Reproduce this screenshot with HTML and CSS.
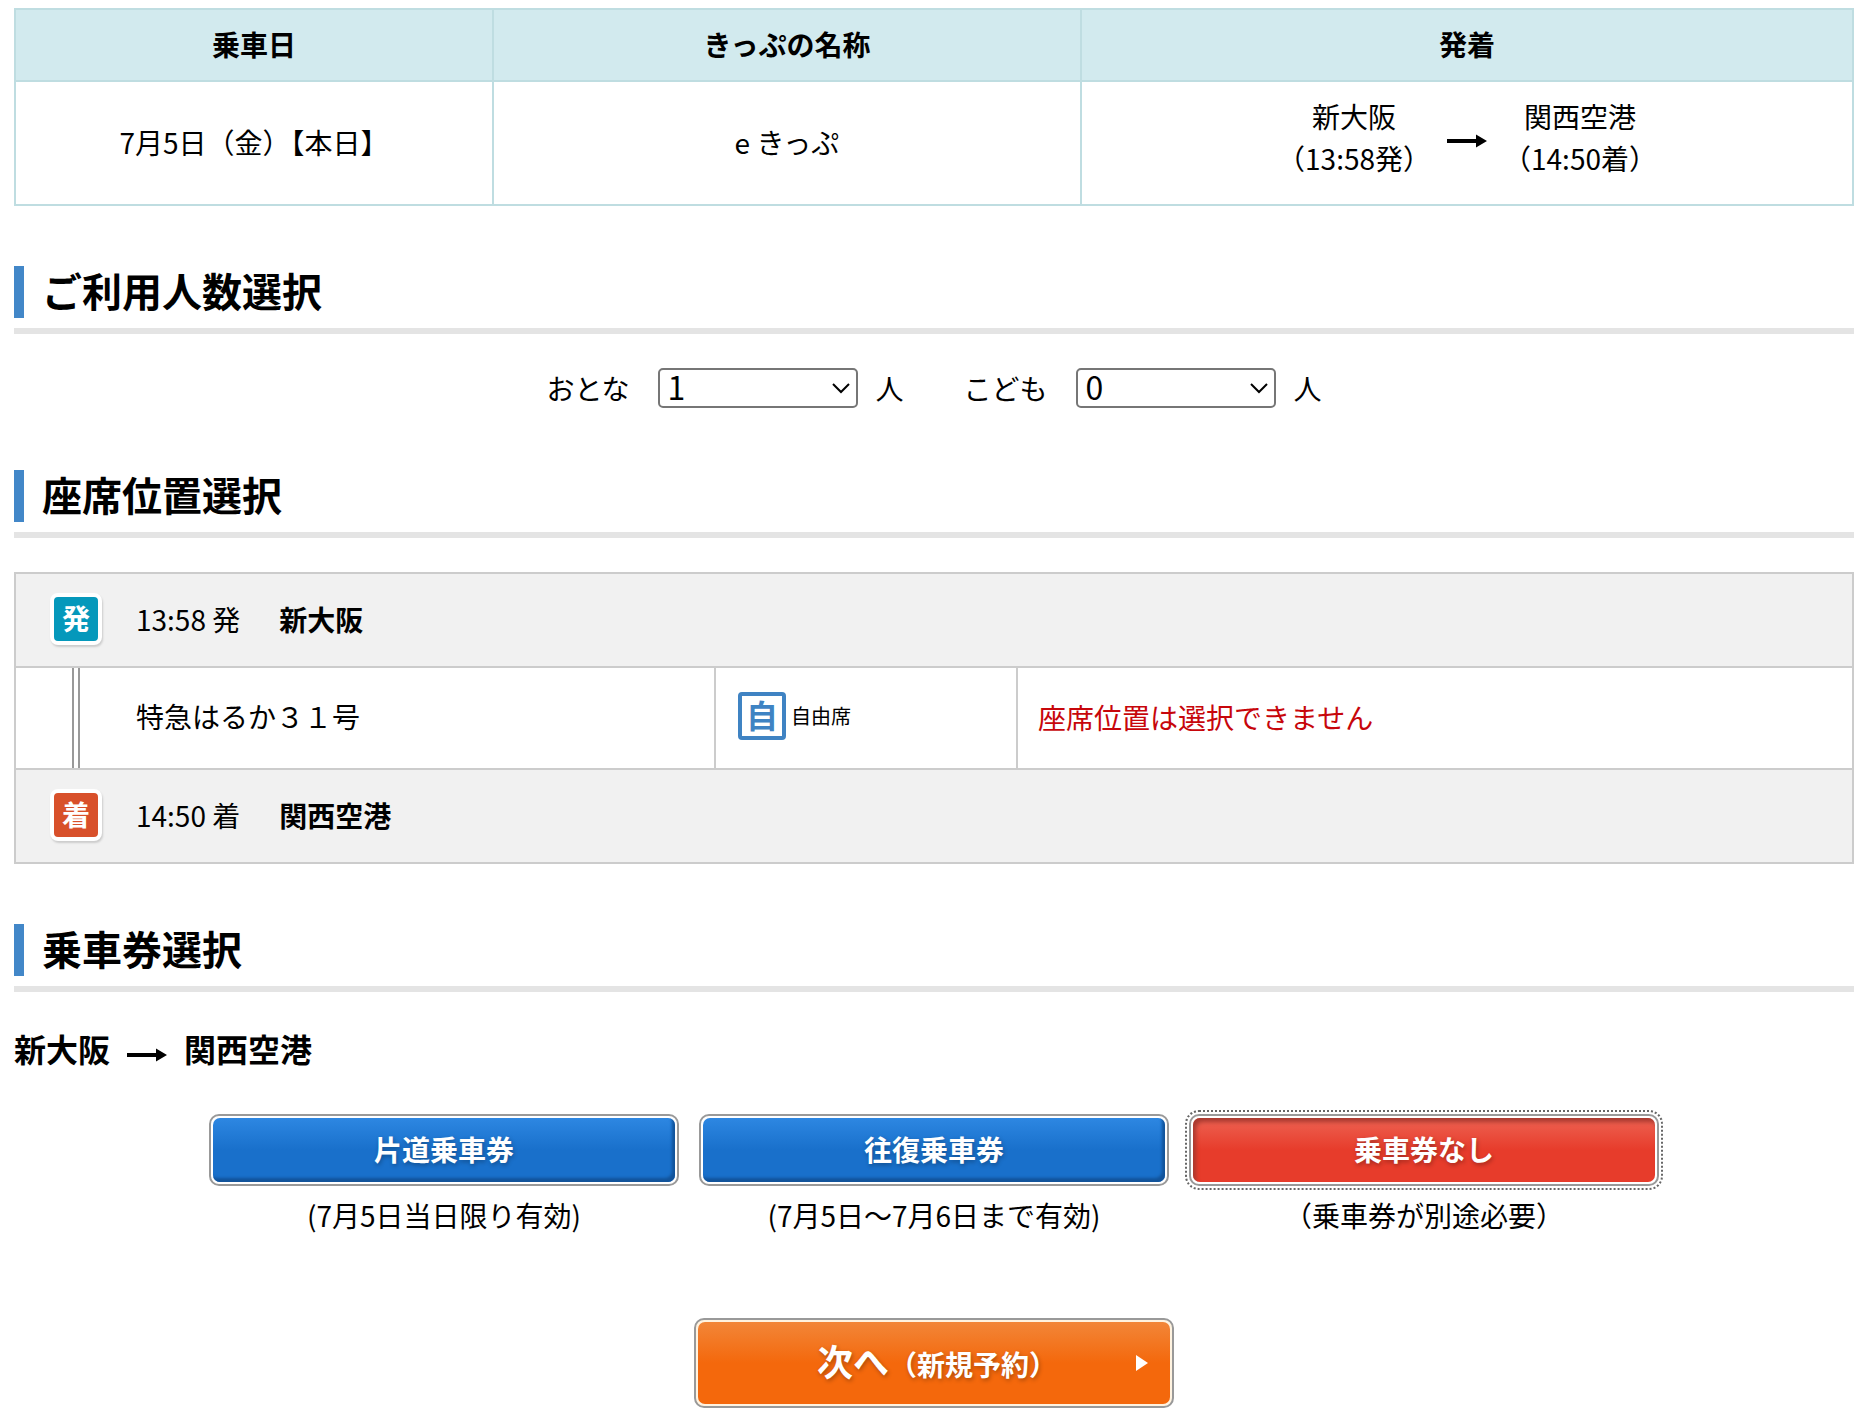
FILE: index.html
```html
<!DOCTYPE html>
<html lang="ja">
<head>
<meta charset="utf-8">
<meta name="viewport" content="width=device-width, initial-scale=1">
<title>人数・座席位置・乗車券選択</title>
<link rel="stylesheet" href="styles.css">
</head>
<body>
<main class="page">
  <table class="summary">
    <colgroup><col class="col-date"><col class="col-name"><col></colgroup>
    <thead>
      <tr><th scope="col">乗車日</th><th scope="col">きっぷの名称</th><th scope="col">発着</th></tr>
    </thead>
    <tbody>
      <tr>
        <td>7月5日（金）【本日】</td>
        <td>e きっぷ</td>
        <td>
          <div class="trip">
            <p class="stop">新大阪<br>（13:58発）</p>
            <svg class="arrow" viewBox="0 0 40 14" aria-hidden="true"><path d="M0 5h29V0.500L40 7 29 13.500V9H0z"/></svg>
            <p class="stop">関西空港<br>（14:50着）</p>
          </div>
        </td>
      </tr>
    </tbody>
  </table>

  <form>
    <section class="section">
      <h2 class="heading"><span class="heading-text">ご利用人数選択</span></h2>
      <div class="people">
        <div class="people-group">
          <label for="adult">おとな</label>
          <span class="select">
            <select id="adult"><option>0</option><option selected>1</option><option>2</option><option>3</option></select>
            <svg class="chevron" viewBox="0 0 18 12" aria-hidden="true"><path d="M1 1l8 8 8-8"/></svg>
          </span>
          <span class="unit">人</span>
        </div>
        <div class="people-group">
          <label for="child">こども</label>
          <span class="select">
            <select id="child"><option selected>0</option><option>1</option><option>2</option><option>3</option></select>
            <svg class="chevron" viewBox="0 0 18 12" aria-hidden="true"><path d="M1 1l8 8 8-8"/></svg>
          </span>
          <span class="unit">人</span>
        </div>
      </div>
    </section>

    <section class="section">
      <h2 class="heading"><span class="heading-text">座席位置選択</span></h2>
      <table class="seats">
        <colgroup><col class="col-rail"><col class="col-train"><col class="col-class"><col></colgroup>
        <tbody>
          <tr class="station">
            <td colspan="4"><div class="station-line">
              <span class="badge badge-dep">発</span><span class="time">13:58 発</span><strong>新大阪</strong>
            </div></td>
          </tr>
          <tr class="train">
            <td class="rail"></td>
            <td class="train-name">特急はるか３１号</td>
            <td class="seat-class"><div class="seat-line"><span class="seat-mark">自</span><span>自由席</span></div></td>
            <td class="notice">座席位置は選択できません</td>
          </tr>
          <tr class="station">
            <td colspan="4"><div class="station-line">
              <span class="badge badge-arr">着</span><span class="time">14:50 着</span><strong>関西空港</strong>
            </div></td>
          </tr>
        </tbody>
      </table>
    </section>

    <section class="section">
      <h2 class="heading"><span class="heading-text">乗車券選択</span></h2>
      <h3 class="route">新大阪<svg class="arrow" viewBox="0 0 40 14" aria-hidden="true"><path d="M0 5h29V0.500L40 7 29 13.500V9H0z"/></svg>関西空港</h3>
      <div class="tickets">
        <div class="ticket"><button type="button" class="btn btn-blue">片道乗車券</button><p>(7月5日当日限り有効)</p></div>
        <div class="ticket"><button type="button" class="btn btn-blue">往復乗車券</button><p>(7月5日～7月6日まで有効)</p></div>
        <div class="ticket"><button type="button" class="btn btn-red">乗車券なし</button><p>（乗車券が別途必要）</p></div>
      </div>
    </section>

    <div class="submit">
      <button type="submit" class="btn btn-next"><span class="next-main">次へ</span>（新規予約）<svg class="play" viewBox="0 0 12 16" aria-hidden="true"><path d="M0 0l12 8-12 8z"/></svg></button>
    </div>
  </form>
</main>
</body>
</html>
```
FILE: styles.css
```css
* { box-sizing: border-box; }

body {
  margin: 0;
  background: #fff;
  color: #000;
  font-family: "Noto Sans CJK JP", sans-serif;
  font-size: 28px;
  line-height: 42px;
}

p, h2, h3 { margin: 0; }

.page { padding: 8px 10px 4px 14px; }

/* Journey summary */
.summary {
  width: 100%;
  border-collapse: collapse;
  table-layout: fixed;
  text-align: center;
}
.summary th,
.summary td { padding: 0 0 2px; border: 2px solid #bfdde1; }
.summary th { height: 72px; background: #d2eaee; font-weight: 700; }
.summary td { height: 124px; }
.col-date { width: 26%; }
.col-name { width: 32%; }

.trip {
  display: flex;
  align-items: center;
  justify-content: center;
  gap: 16px;
  padding-bottom: 10px;
}
.arrow { width: 40px; height: 14px; flex: none; fill: #000; }
.trip .arrow { margin-top: 8px; }

/* Section headings */
.section { padding-top: 60px; }
.heading {
  padding-bottom: 10px;
  margin-bottom: 34px;
  border-bottom: 6px solid #e4e4e4;
  font-size: 40px;
  line-height: 48px;
  font-weight: 700;
}
.heading-text {
  display: block;
  padding: 0 0 4px 18px;
  border-left: 10px solid #4287c8;
}

/* Passenger counts */
.people { display: flex; justify-content: center; gap: 60px; padding-bottom: 2px; }
.people-group { display: flex; align-items: center; line-height: 40px; }
.select { position: relative; display: block; margin: 0 18px 0 28px; }
.select select {
  display: block;
  width: 200px;
  height: 40px;
  padding: 0 40px 4px 8px;
  border: 2px solid #767676;
  border-radius: 5px;
  appearance: none;
  background: #fff;
  color: #000;
  font-family: inherit;
  font-size: 32px;
  line-height: 32px;
}
.chevron {
  position: absolute;
  top: 15px;
  right: 8px;
  width: 18px;
  height: 12px;
  fill: none;
  stroke: #000;
  stroke-width: 2;
  pointer-events: none;
}

/* Seat table */
.seats {
  width: 100%;
  border-collapse: collapse;
  table-layout: fixed;
}
.seats td { padding: 0 0 2px; border: 2px solid #ccc; }
.col-rail { width: 65px; }
.col-train { width: 635px; }
.col-class { width: 302px; }
.station td { height: 94px; background: #f1f1f1; }
.train td { height: 102px; }
.station-line { display: flex; align-items: center; padding-left: 34px; }
.time { margin: 0 39px 0 34px; }
.seats .rail {
  border-right: 0;
  background: linear-gradient(90deg, #999 0 2px, #fff 2px 6px, #999 6px 8px) right / 8px 100% no-repeat;
}
.seats .train-name { padding: 0 0 4px 56px; border-left: 0; }
.badge {
  display: block;
  width: 52px;
  height: 52px;
  border: 4px solid #fff;
  border-radius: 8px;
  box-shadow: 1px 2px 2px #ccc;
  color: #fff;
  font-weight: 700;
  line-height: 42px;
  text-align: center;
}
.badge-dep { background: #0598bb; }
.badge-arr { background: #d8502a; }

.seat-line {
  display: flex;
  align-items: center;
  gap: 5px;
  padding: 0 0 2px 22px;
  font-size: 20px;
}
.seat-mark {
  width: 48px;
  height: 48px;
  border: 4px solid #3f83c3;
  border-radius: 4px;
  color: #3f83c3;
  font-size: 32px;
  font-weight: 700;
  line-height: 36px;
  text-align: center;
}
.seats .notice { padding-left: 20px; color: #c7060b; }

/* Ticket choice */
.route {
  display: flex;
  align-items: center;
  gap: 17px;
  margin-bottom: 44px;
  font-size: 32px;
  line-height: 44px;
  font-weight: 700;
}
.route .arrow { margin-top: 14px; }
.tickets { display: flex; justify-content: center; gap: 20px; }
.ticket { width: 470px; text-align: center; }
.ticket p { padding: 8px 0 2px; }

.btn {
  display: block;
  width: 100%;
  height: 72px;
  padding: 2px 2px 4px;
  border: 2px solid #999;
  border-radius: 10px;
  background: #fff;
  color: #fff;
  font-family: inherit;
  font-size: 28px;
  line-height: 42px;
  font-weight: 700;
  text-shadow: 1px 2px 4px rgba(0, 0, 0, 0.3);
  position: relative;
  isolation: isolate;
}
.btn::before {
  content: "";
  position: absolute;
  z-index: -1;
  inset: 2px;
  border-radius: 7px;
}
.btn-blue::before {
  background: linear-gradient(#2d87e2, #1970cb 50%);
  box-shadow: inset -3px -4px 3px #12539a;
}
.btn-red { outline: 2px dotted #666; outline-offset: 2px; }
.btn-red::before {
  background: linear-gradient(#ed6252, #e73c2b 50%);
  box-shadow: inset 3px 4px 4px #a8392f;
}

.submit { display: flex; justify-content: center; padding-top: 80px; }
.btn-next { width: 480px; height: 90px; padding-left: 8px; background: #fff3e0; }
.btn-next::before { background: linear-gradient(#f28638, #f4680c 50%); }
.next-main { font-size: 36px; }
.play {
  position: absolute;
  top: 35px;
  right: 24px;
  width: 12px;
  height: 16px;
  fill: #fff;
}
```
